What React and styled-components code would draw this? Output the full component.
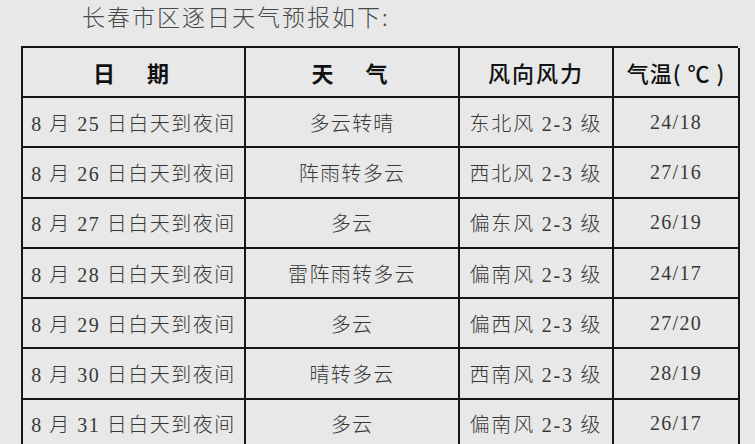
import React from 'react';
import styled, { createGlobalStyle } from 'styled-components';

const GlobalStyle = createGlobalStyle`
  html, body {
    margin: 0;
    padding: 0;
    background: #e8e8e8;
  }
  body {
    font-family: "Liberation Serif", "Noto Sans CJK SC", serif;
    color: #333;
  }
`;

const Page = styled.div`
  padding: 2px 0 0 21px;
`;

const Title = styled.div`
  height: 28px;
  line-height: 28px;
  padding-left: 61px;
  margin-bottom: 16px;
  font-size: 23px;
  letter-spacing: 2px;
  color: #484848;
  font-family: "Noto Sans CJK SC", sans-serif;
  font-weight: 300;
`;

const Table = styled.div`
  display: grid;
  grid-template-columns: 223px 214px 154px 126px;
  grid-template-rows: 50px repeat(7, 50.3px);
  width: 717px;
  border-top: 2px solid #151515;
  border-left: 2px solid #151515;
  box-sizing: border-box;
`;

const Cell = styled.div`
  box-sizing: border-box;
  display: flex;
  align-items: center;
  justify-content: center;
  border-right: 2px solid #151515;
  border-bottom: 2px solid #151515;
  font-size: 20px;
  font-weight: 300;
  letter-spacing: ${p => p.$spread || '1.3px'};
  white-space: nowrap;
  color: #383838;
`;

const HeadCell = styled(Cell)`
  font-family: "Noto Sans CJK SC", sans-serif;
  font-size: 22px;
  color: #111;
  font-weight: ${p => (p.$bold ? 700 : 500)};
`;

const rows = [
  ['8 月 25 日白天到夜间', '多云转晴', '东北风 2-3 级', '24/18'],
  ['8 月 26 日白天到夜间', '阵雨转多云', '西北风 2-3 级', '27/16'],
  ['8 月 27 日白天到夜间', '多云', '偏东风 2-3 级', '26/19'],
  ['8 月 28 日白天到夜间', '雷阵雨转多云', '偏南风 2-3 级', '24/17'],
  ['8 月 29 日白天到夜间', '多云', '偏西风 2-3 级', '27/20'],
  ['8 月 30 日白天到夜间', '晴转多云', '西南风 2-3 级', '28/19'],
  ['8 月 31 日白天到夜间', '多云', '偏南风 2-3 级', '26/17'],
];

export default function App() {
  return (
    <Page>
      <GlobalStyle />
      <Title>长春市区逐日天气预报如下:</Title>
      <Table>
        <HeadCell $bold $spread="5px">日　期</HeadCell>
        <HeadCell $bold $spread="5px">天　气</HeadCell>
        <HeadCell $spread="2px">风向风力</HeadCell>
        <HeadCell $spread="1px">气温( ℃ )</HeadCell>
        {rows.map(r =>
          r.map((v, i) => (
            <Cell key={r[0] + i} $spread={i === 0 ? '1.5px' : i === 2 ? '1.8px' : undefined}>
              {v}
            </Cell>
          ))
        )}
      </Table>
    </Page>
  );
}
